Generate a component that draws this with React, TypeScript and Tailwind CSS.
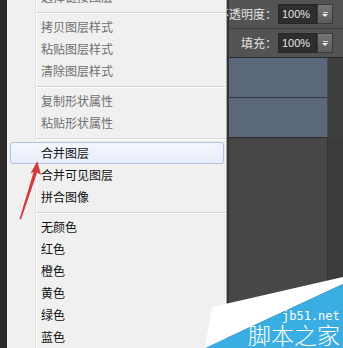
import React from "react";

type Item = { t: string; d?: boolean; hi?: boolean } | "sep";

const items: Item[] = [
  { t: "选择链接图层", d: true },
  "sep",
  { t: "拷贝图层样式", d: true },
  { t: "粘贴图层样式", d: true },
  { t: "清除图层样式", d: true },
  "sep",
  { t: "复制形状属性", d: true },
  { t: "粘贴形状属性", d: true },
  "sep",
  { t: "合并图层", hi: true },
  { t: "合并可见图层" },
  { t: "拼合图像" },
  "sep",
  { t: "无颜色" },
  { t: "红色" },
  { t: "橙色" },
  { t: "黄色" },
  { t: "绿色" },
  { t: "蓝色" },
];

const cjk = { fontFamily: '"Noto Sans CJK SC", "Noto Sans", sans-serif' };

function Field({ label }: { label: string }) {
  return (
    <div className="h-[28px] flex items-center justify-end pr-[10px] bg-[#535353]">
      <span className="shrink-0 text-[12px] text-[#e2e2e2] whitespace-nowrap leading-none" style={cjk}>
        {label}
      </span>
      <div className="shrink-0 ml-[1px] h-[20px] w-[39px] bg-[#2e2e2e] border border-[#262626] flex items-center pl-[3px]">
        <span
          className="text-[11px] text-[#e6e6e6] leading-none"
          style={{ fontFamily: '"Liberation Sans", Arial, sans-serif' }}
        >
          100%
        </span>
      </div>
      <div className="shrink-0 h-[20px] w-[16px] bg-gradient-to-b from-[#767676] to-[#5c5c5c] border border-[#3a3a3a] flex flex-col items-center justify-center">
        <div className="w-[5px] h-px bg-[#d8d8d8] mb-[1px]" />
        <div className="w-0 h-0 border-l-[3px] border-r-[3px] border-t-[3px] border-l-transparent border-r-transparent border-t-[#f0f0f0]" />
      </div>
    </div>
  );
}

export default function App() {
  return (
    <div className="relative w-[343px] h-[348px] overflow-hidden flex bg-[#474747]">
      {/* left dark strip */}
      <div className="w-[7px] h-full shrink-0 bg-[#292929]" />

      {/* menu */}
      <div className="relative z-10 w-[220px] shrink-0 h-full bg-[#f0f0f0] border-r border-[#a9a9a9] overflow-hidden">
        {/* gutter line */}
        <div className="absolute top-0 bottom-0 left-[28px] w-px bg-[#e2e3e3]" />
        <div className="absolute top-0 bottom-0 left-[29px] w-px bg-white" />
        <div className="relative flex flex-col mt-[-14px]">
          {items.map((it, i) =>
            it === "sep" ? (
              <div key={i} className="h-[8px] pl-[29px]">
                <div className="mt-[4px] h-px bg-[#d6d6d6]" />
                <div className="h-px bg-white" />
              </div>
            ) : (
              <div key={i} className="relative h-[22px] flex items-center">
                {it.hi && (
                  <div className="absolute left-[3px] w-[214px] top-0 h-[22px] rounded-[3px] border border-[#afc0e0] bg-gradient-to-b from-[#f3f6fd] to-[#e8eefa]" />
                )}
                <span
                  className={
                    "relative pl-[34px] text-[12px] leading-none whitespace-nowrap " +
                    (it.d ? "text-[#6f6f6f]" : "text-[#111111]")
                  }
                  style={cjk}
                >
                  {it.t}
                </span>
              </div>
            )
          )}
        </div>
      </div>

      {/* right panel */}
      <div className="flex-1 min-w-0 h-full flex flex-col border-l-2 border-[#333333]">
        <Field label="不透明度：" />
        <div className="h-px bg-[#3a3a3a]" />
        <Field label="填充：" />
        <div className="h-px bg-[#2c2c2c]" />
        <div className="flex h-[80px]">
          <div className="w-[98px] shrink-0 flex flex-col bg-[#5b6879]">
            <div className="h-[39px]" />
            <div className="h-px bg-[#2f3843]" />
            <div className="flex-1" />
            <div className="h-px bg-[#2c2c2c]" />
          </div>
          <div className="flex-1 bg-[#3f3f3f] border-l border-[#4a4a4a]" />
        </div>
        <div className="flex flex-1">
          <div className="w-[98px] shrink-0 bg-[#474747]" />
          <div className="flex-1 bg-[#3c3c3c] border-l border-[#353535]" />
        </div>
      </div>

      {/* red arrow */}
      <svg className="absolute z-20 left-0 top-0 pointer-events-none" width="343" height="348">
        <polygon
          points="37.3,161 41,175 37.2,172.6 21,219.5 19.5,219 33.6,172 30.5,173.5"
          fill="#d23c3c"
        />
      </svg>

      {/* watermark */}
      <svg className="absolute z-20 left-0 top-0 pointer-events-none" width="343" height="348">
        <polygon points="212,307 343,277 343,284 205,348" fill="#ffffff" />
        <polygon points="205,348 343,284 343,348" fill="#3aaee2" />
      </svg>
      <div
        className="absolute z-30 left-[282px] top-[310px] text-[12px] leading-none text-white"
        style={{ fontFamily: '"DejaVu Sans Mono", monospace' }}
      >
        jb51.net
      </div>
      <div
        className="absolute z-30 left-[248px] top-[323px] text-[23px] leading-none text-white font-light"
        style={cjk}
      >
        脚本之家
      </div>
    </div>
  );
}
